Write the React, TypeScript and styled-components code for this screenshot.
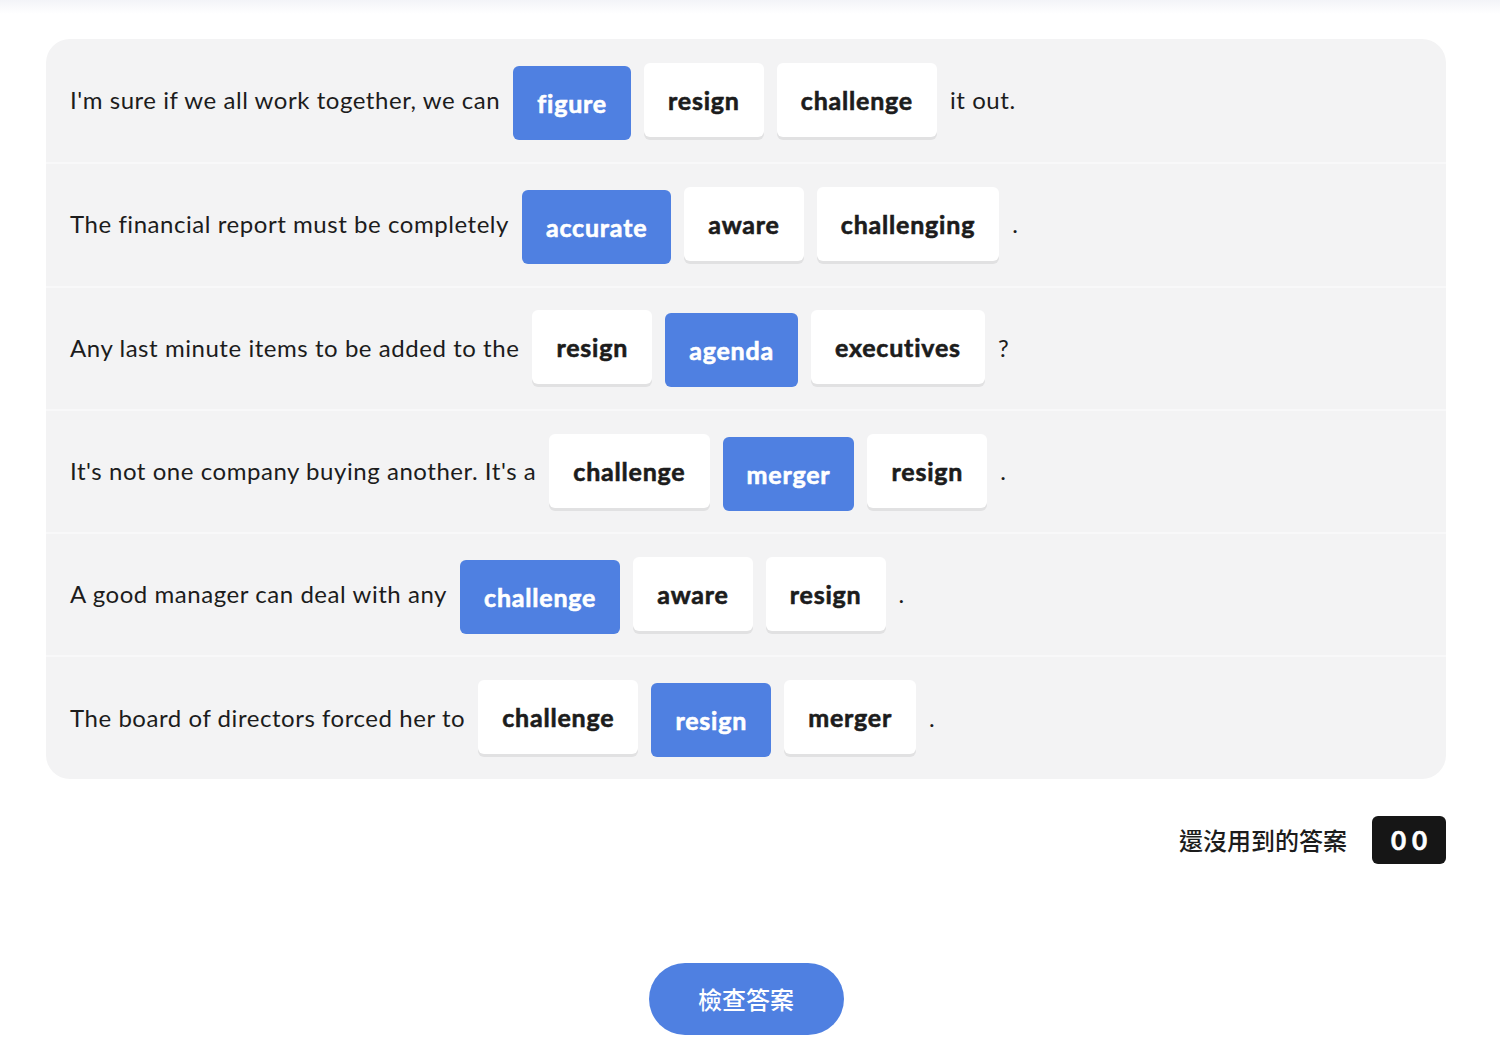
import React, { useState } from "react";
import styled, { createGlobalStyle } from "styled-components";

const GlobalStyle = createGlobalStyle`
  body {
    margin: 0;
    background: #ffffff;
    font-family: "Lato", "Noto Sans CJK TC", sans-serif;
    color: #1c1c1c;
  }
`;

const TopShade = styled.div`
  height: 14px;
  background: linear-gradient(#f3f4f8, #ffffff);
`;

const Page = styled.div`
  width: 1400px;
  margin: 25px 0 0 46px;

  display: flex;
  flex-direction: column;
`;

const Card = styled.div`
  background-color: #f3f3f4;
  border-radius: 24px;
  overflow: hidden;

  display: flex;
  flex-direction: column;
`;

const Row = styled.div`
  box-sizing: border-box;
  height: 123.3px;
  padding: 0 24px 2px;

  display: flex;
  align-items: center;
  gap: 13px;

  & + & {
    border-top: 2px solid #f8f8f9;
  }
`;

const Sentence = styled.span`
  font-size: 24px;
  letter-spacing: 0.55px;
  white-space: nowrap;
`;

const WordButton = styled.button<{ $selected: boolean }>`
  height: 74px;
  padding: 0 24px;

  font-family: "Lato", sans-serif;
  font-size: 25px;
  font-weight: 700;
  letter-spacing: 0.8px;
  -webkit-text-stroke: 0.6px currentColor;

  color: ${({ $selected }) => ($selected ? "#ffffff" : "#1c1c1c")};
  background-color: ${({ $selected }) => ($selected ? "#4f80e1" : "#ffffff")};

  border: none;
  border-radius: 6px;

  box-shadow: ${({ $selected }) =>
    $selected ? "none" : "0 3px 0 rgba(0, 0, 0, 0.07)"};
  transform: ${({ $selected }) => ($selected ? "translateY(3px)" : "none")};

  cursor: pointer;
`;

const CounterRow = styled.div`
  margin-top: 37px;

  display: flex;
  justify-content: flex-end;
  align-items: center;
  gap: 25px;
`;

const CounterLabel = styled.span`
  font-family: "Noto Sans CJK TC", sans-serif;
  font-size: 24px;
  font-weight: 500;
`;

const CounterBox = styled.div`
  width: 74px;
  height: 48px;

  display: flex;
  align-items: center;
  justify-content: center;

  background-color: #161616;
  color: #ffffff;
  border-radius: 6px;

  font-family: "Lato", sans-serif;
  font-size: 26px;
  font-weight: 700;
  letter-spacing: 6px;
  padding-left: 6px;
  box-sizing: border-box;
  -webkit-text-stroke: 0.6px currentColor;
`;

const Footer = styled.div`
  margin-top: 99px;

  display: flex;
  justify-content: center;
`;

const CheckButton = styled.button`
  width: 195px;
  height: 72px;

  font-family: "Noto Sans CJK TC", sans-serif;
  font-size: 24px;
  font-weight: 500;
  color: #ffffff;

  background-color: #4f80e1;
  border: none;
  border-radius: 36px;

  cursor: pointer;
`;

type Question = {
  before: string;
  options: string[];
  after: string;
  answer: number;
};

const QUESTIONS: Question[] = [
  {
    before: "I'm sure if we all work together, we can",
    options: ["figure", "resign", "challenge"],
    after: "it out.",
    answer: 0,
  },
  {
    before: "The financial report must be completely",
    options: ["accurate", "aware", "challenging"],
    after: ".",
    answer: 0,
  },
  {
    before: "Any last minute items to be added to the",
    options: ["resign", "agenda", "executives"],
    after: "?",
    answer: 1,
  },
  {
    before: "It's not one company buying another. It's a",
    options: ["challenge", "merger", "resign"],
    after: ".",
    answer: 1,
  },
  {
    before: "A good manager can deal with any",
    options: ["challenge", "aware", "resign"],
    after: ".",
    answer: 0,
  },
  {
    before: "The board of directors forced her to",
    options: ["challenge", "resign", "merger"],
    after: ".",
    answer: 1,
  },
];

function App() {
  const [picks, setPicks] = useState(QUESTIONS.map((q) => q.answer));

  const choose = (row: number, option: number) => {
    setPicks((prev) => prev.map((p, i) => (i === row ? option : p)));
  };

  return (
    <>
      <GlobalStyle />
      <TopShade />
      <Page>
        <Card>
          {QUESTIONS.map((q, row) => (
            <Row key={row}>
              <Sentence>{q.before}</Sentence>
              {q.options.map((word, i) => (
                <WordButton
                  key={word + i}
                  $selected={picks[row] === i}
                  onClick={() => choose(row, i)}
                >
                  {word}
                </WordButton>
              ))}
              <Sentence>{q.after}</Sentence>
            </Row>
          ))}
        </Card>
        <CounterRow>
          <CounterLabel>還沒用到的答案</CounterLabel>
          <CounterBox>00</CounterBox>
        </CounterRow>
        <Footer>
          <CheckButton>檢查答案</CheckButton>
        </Footer>
      </Page>
    </>
  );
}

export default App;
